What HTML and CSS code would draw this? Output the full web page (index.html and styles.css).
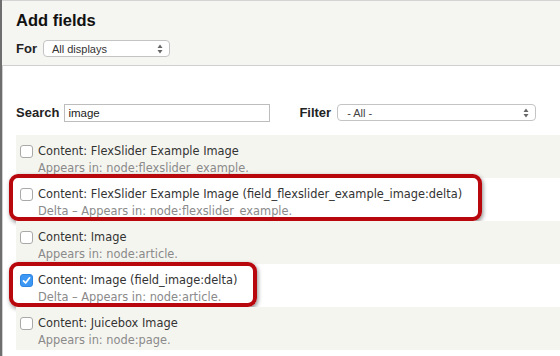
FILE: index.html
```html
<!DOCTYPE html>
<html lang="en">
<head>
    <meta charset="UTF-8">
    <meta name="viewport" content="width=device-width, initial-scale=1.0">
    <title>Add fields</title>
    <link rel="stylesheet" href="styles.css">
</head>
<body>

    <div class="page">
        <!-- Header -->
        <div class="header">
            <h2>Add fields</h2>
            <div class="for-row">
                <span class="label">For</span>
                <div class="select select-for">
                    <span>All displays</span>
                    <svg class="arrows" width="6" height="10" viewBox="0 0 6 10"><path d="M3 0.5L5.5 4H0.5Z M3 9.5L5.5 6H0.5Z" fill="#666"/></svg>
                </div>
            </div>
        </div>

        <!-- Search / filter -->
        <div class="filters">
            <span class="label">Search</span>
            <input class="search-input" type="text" value="image">
            <span class="label filter-label">Filter</span>
            <div class="select select-filter">
                <span>- All -</span>
                <svg class="arrows" width="6" height="10" viewBox="0 0 6 10"><path d="M3 0.5L5.5 4H0.5Z M3 9.5L5.5 6H0.5Z" fill="#666"/></svg>
            </div>
        </div>

        <!-- Field list -->
        <div class="fields">
            <div class="field odd">
                <div class="field-title"><span class="checkbox"></span>Content: FlexSlider Example Image</div>
                <div class="field-desc">Appears in: node:flexslider_example.</div>
            </div>
            <div class="field even highlight highlight-wide">
                <div class="field-title"><span class="checkbox"></span>Content: FlexSlider Example Image (field_flexslider_example_image:delta)</div>
                <div class="field-desc">Delta – Appears in: node:flexslider_example.</div>
            </div>
            <div class="field odd">
                <div class="field-title"><span class="checkbox"></span>Content: Image</div>
                <div class="field-desc">Appears in: node:article.</div>
            </div>
            <div class="field even highlight highlight-narrow">
                <div class="field-title"><span class="checkbox checked"><svg width="9" height="9" viewBox="0 0 9 9"><path d="M1.5 4.8L3.6 7L7.6 1.8" fill="none" stroke="#fff" stroke-width="1.7" stroke-linecap="round" stroke-linejoin="round"/></svg></span>Content: Image (field_image:delta)</div>
                <div class="field-desc">Delta – Appears in: node:article.</div>
            </div>
            <div class="field odd">
                <div class="field-title"><span class="checkbox"></span>Content: Juicebox Image</div>
                <div class="field-desc">Appears in: node:page.</div>
            </div>
        </div>
    </div>

</body>
</html>
```

FILE: styles.css
```css
  body {
      font-family: 'DejaVu Sans', 'Liberation Sans', sans-serif;
      background-color: #fff;
      color: #333;
      margin: 0;
      padding: 0;
  }
  .page {
      height: 356px;
      border-left: 2px solid #6e6e6e;
      box-shadow: inset 1px 0 0 #cfcfcf;
      overflow: hidden;
  }

  /* Header */
  .header {
      background-color: #f5f5f1;
      border-top: 1px solid #d4d4d4;
      border-bottom: 1px solid #d0d0d0;
      height: 66px;
      box-sizing: border-box;
      padding: 8px 0 0 14px;
  }
  .header h2 {
      margin: 0;
      font-family: 'Liberation Sans', sans-serif;
      font-size: 16.5px;
      font-weight: bold;
      color: #111;
      line-height: 22px;
  }
  .for-row {
      display: flex;
      align-items: center;
      gap: 6px;
      margin-top: 9px;
  }
  .label {
      font-family: 'Liberation Sans', sans-serif;
      font-size: 13px;
      font-weight: bold;
      color: #222;
  }

  /* Fake selects */
  .select {
      display: flex;
      align-items: center;
      justify-content: space-between;
      box-sizing: border-box;
      height: 17px;
      border: 1px solid #c4c4c4;
      border-radius: 4px;
      background-color: #fff;
      font-family: 'Liberation Sans', sans-serif;
      font-size: 11px;
      color: #333;
      padding: 0 6px 0 8px;
  }
  .select-for {
      width: 127px;
  }
  .select-filter {
      width: 199px;
      padding-left: 9px;
  }
  .select-filter span {
      color: #444;
  }

  /* Search row */
  .filters {
      display: flex;
      align-items: center;
      height: 69px;
      box-sizing: border-box;
      padding: 24px 0 0 14px;
  }
  .search-input {
      width: 206px;
      height: 18px;
      box-sizing: border-box;
      margin: 0 0 0 5px;
      border: 1px solid #bdbdbd;
      padding: 0 3px;
      font-family: 'Liberation Sans', sans-serif;
      font-size: 11.5px;
      color: #222;
  }
  .filter-label {
      margin-left: 29px;
      margin-right: 6px;
  }

  /* Field list */
  .fields {
      margin-left: 14px;
  }
  .field {
      height: 43px;
      box-sizing: border-box;
      padding: 8px 0 0 4px;
      font-size: 11.4px;
      line-height: 16px;
      position: relative;
  }
  .field.odd {
      background-color: #f5f5f0;
  }
  .field.even {
      background-color: #fff;
  }
  .field-title {
      display: flex;
      align-items: center;
      color: #333;
  }
  .field-desc {
      color: #8a8a8a;
      padding-left: 18px;
      margin-top: 1px;
  }
  .checkbox {
      display: inline-flex;
      align-items: center;
      justify-content: center;
      width: 11px;
      height: 11px;
      border: 1px solid #a9a9a9;
      border-radius: 3px;
      background-color: #fff;
      margin-right: 5px;
      flex-shrink: 0;
  }
  .checkbox.checked {
      background-color: #3d98f5;
      border-color: #2f86e0;
  }

  /* red annotation boxes */
  .highlight::after {
      content: "";
      position: absolute;
      left: -7px;
      border: 4px solid #b8070d;
      border-radius: 9px;
      box-shadow: 1px 2px 4px rgba(0, 0, 0, 0.45);
      box-sizing: border-box;
  }
  .highlight-wide::after {
      top: -4px;
      width: 473px;
      height: 47px;
  }
  .highlight-narrow::after {
      top: -2px;
      width: 248px;
      height: 45px;
  }
```
